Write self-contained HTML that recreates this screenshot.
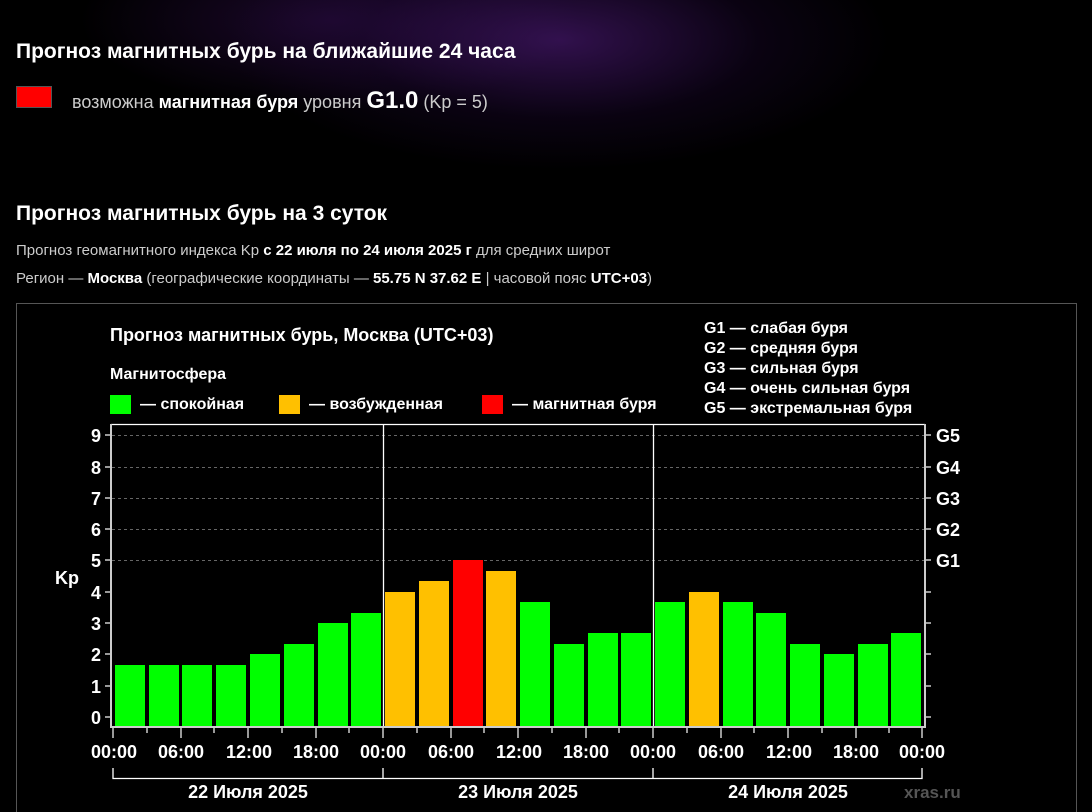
<!DOCTYPE html>
<html><head><meta charset="utf-8"><style>
body{margin:0;width:1092px;height:812px;overflow:hidden;background:#000;font-family:"Liberation Sans",sans-serif;color:#fff;position:relative}
.bg{position:absolute;left:0;top:0;width:1092px;height:300px;background:radial-gradient(ellipse 330px 130px at 560px 40px,rgba(90,30,140,.55),rgba(40,10,70,.25) 60%,rgba(0,0,0,0) 100%),radial-gradient(ellipse 250px 90px at 330px 20px,rgba(70,20,110,.4),rgba(0,0,0,0) 100%)}
.a{position:absolute;white-space:nowrap}
h2{margin:0;font-size:21px;font-weight:bold}
.g{color:#ccc}
</style></head><body>
<div class="bg"></div>
<h2 class="a" style="left:16px;top:40px">Прогноз магнитных бурь на ближайшие 24 часа</h2>
<div class="a" style="left:16px;top:86px;width:36px;height:22px;background:#f00;border:1px solid #555;box-sizing:border-box"></div>
<div class="a g" style="left:72px;top:87px;font-size:18px">возможна <b style="color:#fff">магнитная буря</b> уровня <b style="color:#fff;font-size:24px">G1.0</b> (Kp = 5)</div>
<h2 class="a" style="left:16px;top:202px">Прогноз магнитных бурь на 3 суток</h2>
<div class="a g" style="left:16px;top:242px;font-size:15px">Прогноз геомагнитного индекса Kp <b style="color:#fff">с 22 июля по 24 июля 2025 г</b> для средних широт</div>
<div class="a g" style="left:16px;top:270px;font-size:15px">Регион — <b style="color:#fff">Москва</b> (географические координаты — <b style="color:#fff">55.75 N 37.62 E</b> | часовой пояс <b style="color:#fff">UTC+03</b>)</div>
<svg class="a" style="left:0;top:0" width="1092" height="812" font-family="Liberation Sans,sans-serif" font-weight="bold" fill="#fff">
<rect x="16.5" y="303.5" width="1060" height="520" fill="none" stroke="#555"/>
<text x="110" y="341" font-size="18">Прогноз магнитных бурь, Москва (UTC+03)</text>
<text x="110" y="379" font-size="16">Магнитосфера</text>
<rect x="110" y="395" width="21" height="19" fill="#0f0"/><text x="140" y="409" font-size="16">— спокойная</text>
<rect x="279" y="395" width="21" height="19" fill="#ffc000"/><text x="309" y="409" font-size="16">— возбужденная</text>
<rect x="482" y="395" width="21" height="19" fill="#f00"/><text x="512" y="409" font-size="16">— магнитная буря</text>
<g font-size="16"><text x="704" y="333">G1 — слабая буря</text><text x="704" y="353">G2 — средняя буря</text><text x="704" y="373">G3 — сильная буря</text><text x="704" y="393">G4 — очень сильная буря</text><text x="704" y="413">G5 — экстремальная буря</text></g>
<g stroke="#666" stroke-dasharray="3,3"><line x1="112" x2="924" y1="435.5" y2="435.5"/><line x1="112" x2="924" y1="467.5" y2="467.5"/><line x1="112" x2="924" y1="498.5" y2="498.5"/><line x1="112" x2="924" y1="529.5" y2="529.5"/><line x1="112" x2="924" y1="560.5" y2="560.5"/></g>
<g fill="#0f0">
<rect x="115" y="665" width="30" height="62"/><rect x="149" y="665" width="30" height="62"/><rect x="182" y="665" width="30" height="62"/><rect x="216" y="665" width="30" height="62"/><rect x="250" y="654" width="30" height="73"/><rect x="284" y="644" width="30" height="83"/><rect x="318" y="623" width="30" height="104"/><rect x="351" y="613" width="30" height="114"/>
<rect x="520" y="602" width="30" height="125"/><rect x="554" y="644" width="30" height="83"/><rect x="588" y="633" width="30" height="94"/><rect x="621" y="633" width="30" height="94"/>
<rect x="655" y="602" width="30" height="125"/><rect x="723" y="602" width="30" height="125"/><rect x="756" y="613" width="30" height="114"/><rect x="790" y="644" width="30" height="83"/><rect x="824" y="654" width="30" height="73"/><rect x="858" y="644" width="30" height="83"/><rect x="891" y="633" width="30" height="94"/>
</g>
<g fill="#ffc000"><rect x="385" y="592" width="30" height="135"/><rect x="419" y="581" width="30" height="146"/><rect x="486" y="571" width="30" height="156"/><rect x="689" y="592" width="30" height="135"/></g>
<rect x="453" y="560" width="30" height="167" fill="#f00"/>
<g stroke="#fff" stroke-width="1.3"><line x1="383.5" x2="383.5" y1="424" y2="727"/><line x1="653.5" x2="653.5" y1="424" y2="727"/><line x1="111" x2="925" y1="424.5" y2="424.5"/></g>
<g stroke="#ccc" stroke-width="2"><line x1="111" x2="111" y1="424" y2="728"/><line x1="925" x2="925" y1="424" y2="728"/><line x1="110" x2="926" y1="727" y2="727"/></g>
<g stroke="#ccc" stroke-width="1.5">
<line x1="105" x2="111" y1="717" y2="717"/><line x1="105" x2="111" y1="686" y2="686"/><line x1="105" x2="111" y1="654" y2="654"/><line x1="105" x2="111" y1="623" y2="623"/><line x1="105" x2="111" y1="592" y2="592"/><line x1="105" x2="111" y1="560" y2="560"/><line x1="105" x2="111" y1="529" y2="529"/><line x1="105" x2="111" y1="498" y2="498"/><line x1="105" x2="111" y1="467" y2="467"/><line x1="105" x2="111" y1="435" y2="435"/>
<line x1="925" x2="931" y1="717" y2="717"/><line x1="925" x2="931" y1="686" y2="686"/><line x1="925" x2="931" y1="654" y2="654"/><line x1="925" x2="931" y1="623" y2="623"/><line x1="925" x2="931" y1="592" y2="592"/><line x1="925" x2="931" y1="560" y2="560"/><line x1="925" x2="931" y1="529" y2="529"/><line x1="925" x2="931" y1="498" y2="498"/><line x1="925" x2="931" y1="467" y2="467"/><line x1="925" x2="931" y1="435" y2="435"/>
</g>
<g stroke="#ccc" stroke-width="1.5">
<path d="M113 728v10M147 728v5M181 728v10M214 728v5M248 728v10M282 728v5M316 728v10M349 728v5M383 728v10M417 728v5M451 728v10M484 728v5M518 728v10M552 728v5M586 728v10M619 728v5M653 728v10M687 728v5M721 728v10M754 728v5M788 728v10M822 728v5M856 728v10M889 728v5M922 728v10"/>
</g>
<path d="M113 768v10.5H922V768M383 768v10M653 768v10" stroke="#fff" stroke-width="1.3" fill="none"/>
<g font-size="18" text-anchor="end"><text x="101" y="724">0</text><text x="101" y="693">1</text><text x="101" y="661">2</text><text x="101" y="630">3</text><text x="101" y="599">4</text><text x="101" y="567">5</text><text x="101" y="536">6</text><text x="101" y="505">7</text><text x="101" y="474">8</text><text x="101" y="442">9</text></g>
<text x="55" y="584" font-size="18">Kp</text>
<g font-size="18"><text x="936" y="567">G1</text><text x="936" y="536">G2</text><text x="936" y="505">G3</text><text x="936" y="474">G4</text><text x="936" y="442">G5</text></g>
<g font-size="18" text-anchor="middle"><text x="114" y="758">00:00</text><text x="181" y="758">06:00</text><text x="249" y="758">12:00</text><text x="316" y="758">18:00</text><text x="383" y="758">00:00</text><text x="451" y="758">06:00</text><text x="519" y="758">12:00</text><text x="586" y="758">18:00</text><text x="653" y="758">00:00</text><text x="721" y="758">06:00</text><text x="789" y="758">12:00</text><text x="856" y="758">18:00</text><text x="922" y="758">00:00</text>
<text x="248" y="798">22 Июля 2025</text><text x="518" y="798">23 Июля 2025</text><text x="788" y="798">24 Июля 2025</text></g>
<text x="904" y="798" font-size="17" fill="#555">xras.ru</text>
</svg>
</body></html>
